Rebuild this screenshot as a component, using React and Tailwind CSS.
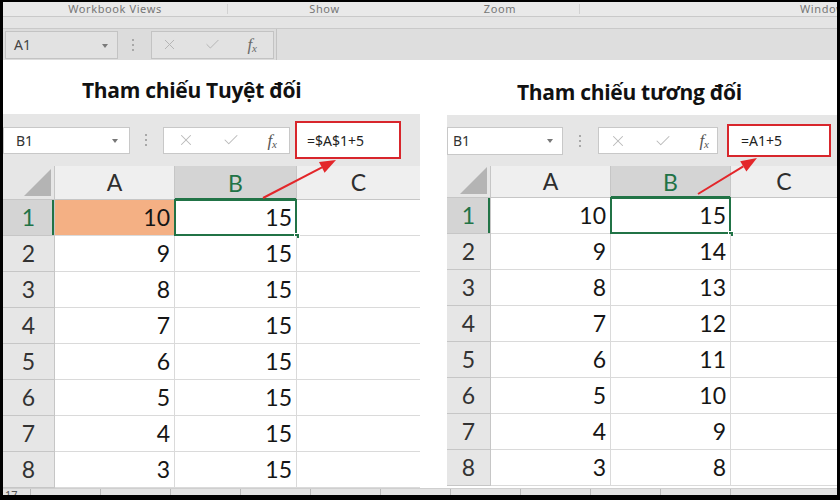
import React from "react";
import { X, Check } from "lucide-react";

const LEFT_ROWS = [[10, 15], [9, 15], [8, 15], [7, 15], [6, 15], [5, 15], [4, 15], [3, 15]];
const RIGHT_ROWS = [[10, 15], [9, 14], [8, 13], [7, 12], [6, 11], [5, 10], [4, 9], [3, 8]];

const LEFT = {
  w: "w-[417px]",
  title: "h-[54px] pt-[15px] pl-[79px]",
  bar: "h-[52px]",
  name: "w-[127px] h-[27px] pl-[12px]",
  arrow: "right-[11px]",
  dots: "ml-[15px]",
  tools: "ml-[15px] w-[127px] pl-[13px] pr-[12px]",
  red: "ml-[5px] w-[106px] h-[38px] pl-[10px]",
  hh: "h-[34px]",
  rh: "w-[52px]",
  ca: "w-[120px]",
  cb: "w-[122px]",
};

const RIGHT = {
  w: "w-[390px]",
  title: "h-[55px] pt-[17px] pl-[70px]",
  bar: "h-[51px]",
  name: "w-[116px] h-[28px] pl-[5px]",
  arrow: "right-[9px]",
  dots: "ml-[16px]",
  tools: "ml-[16px] w-[120px] pl-[10px] pr-[8px]",
  red: "ml-[9px] w-[104px] h-[33px] pl-[12px]",
  hh: "h-[32px]",
  rh: "w-[44px]",
  ca: "w-[120px]",
  cb: "w-[120px]",
};

function Fx({ className = "" }) {
  return (
    <span className={`font-['Liberation_Serif',serif] italic text-[17px] leading-none ${className}`}>
      f<span className="text-[11px] relative top-[2px]">x</span>
    </span>
  );
}

function Dots({ className = "" }) {
  return (
    <div className={`flex flex-col gap-[3px] w-[3px] ${className}`}>
      <span className="h-[2px] w-[2px] bg-[#a8a8a8]" />
      <span className="h-[2px] w-[2px] bg-[#a8a8a8]" />
      <span className="h-[2px] w-[2px] bg-[#a8a8a8]" />
    </div>
  );
}

function Ribbon() {
  return (
    <div className="font-['Noto_Sans',sans-serif]">
      {/* group labels */}
      <div className="h-[14px] flex bg-[#e9e9e9] text-[11px] tracking-[0.6px] leading-[14px] text-[#767676] border-b border-[#c9c9c9] box-content">
        <div className="w-[224px] text-center">Workbook Views</div>
        <div className="w-px my-[2px] bg-[#d2d2d2]" />
        <div className="w-[193px] text-center">Show</div>
        <div className="w-[158px] text-center">Zoom</div>
        <div className="w-px my-[2px] bg-[#d2d2d2]" />
        <div className="flex-1 pl-[220px] whitespace-nowrap overflow-hidden">Window</div>
      </div>
      <div className="h-[11px] bg-[#e4e4e4] border-b border-[#c9c9c9] box-content" />
      {/* formula bar */}
      <div className="h-[31px] flex items-center bg-[#dcdcdc]">
        <div className="relative ml-[2px] w-[113px] h-[28px] bg-[#e2e2e2] border border-[#c3c3c3] flex items-center pl-[8px] text-[14px] text-[#444]">
          A1
          <span className="absolute right-[9px] top-[12px] border-x-[3.5px] border-x-transparent border-t-[4px] border-t-[#7a7a7a]" />
        </div>
        <Dots className="ml-[14px]" />
        <div className="ml-[16px] w-[123px] h-[28px] bg-[#e2e2e2] border border-[#c3c3c3] flex items-center justify-between pl-[9px] pr-[16px] text-[#b4b4b4]">
          <X size={17} strokeWidth={1.4} />
          <Check size={17} strokeWidth={1.4} />
          <Fx className="text-[#6a6a6a]" />
        </div>
        <div className="ml-[2px] flex-1 h-[31px] bg-[#dedede] border-l border-[#c3c3c3]" />
      </div>
    </div>
  );
}

function FormulaStrip({ cfg, formula }) {
  return (
    <div className={`flex items-center bg-[#e6e6e6] font-['Noto_Sans',sans-serif] ${cfg.bar}`}>
      <div className={`relative bg-white border border-[#c8c8c8] flex items-center text-[14px] text-[#333] ${cfg.name}`}>
        B1
        <span className={`absolute top-[11px] border-x-[3.5px] border-x-transparent border-t-[4px] border-t-[#777] ${cfg.arrow}`} />
      </div>
      <Dots className={cfg.dots} />
      <div className={`h-[27px] bg-white border border-[#c8c8c8] flex items-center justify-between text-[#b9b9b9] ${cfg.tools}`}>
        <X size={18} strokeWidth={1.4} />
        <Check size={18} strokeWidth={1.4} />
        <Fx className="text-[#555]" />
      </div>
      <div className={`border-2 border-[#d8262c] bg-white flex items-center text-[14px] text-[#222] ${cfg.red}`}>
        {formula}
      </div>
    </div>
  );
}

function Grid({ cfg, rows, orange }) {
  return (
    <div className="font-['Lato',sans-serif]">
      <div className={`flex ${cfg.hh}`}>
        <div className={`relative bg-[#e6e6e6] border-r border-b border-[#c6c6c6] ${cfg.rh}`}>
          <svg className="absolute right-[3px] bottom-[3px]" width="27" height="27" viewBox="0 0 27 27">
            <polygon points="27,0 27,27 0,27" fill="#b4b4b4" />
          </svg>
        </div>
        <div className={`flex items-center justify-center bg-[#efefef] border-r border-b border-[#c6c6c6] text-[23px] text-[#2e2e2e] ${cfg.ca}`}>A</div>
        <div className={`flex items-center justify-center bg-[#d4d4d4] border-r border-[#c6c6c6] shadow-[inset_0_-2px_0_#217346] text-[23px] text-[#217346] ${cfg.cb}`}>B</div>
        <div className="flex-1 flex items-center justify-center bg-[#efefef] border-b border-[#c6c6c6] text-[23px] text-[#2e2e2e]">C</div>
      </div>
      {rows.map(([a, b], i) => (
        <div key={i} className="flex h-[36px] text-[23px] text-[#151515]">
          <div
            className={`flex items-center justify-center border-r border-b ${cfg.rh} ${
              i === 0
                ? "bg-[#d4d4d4] text-[#217346] border-[#c6c6c6] shadow-[inset_-2px_0_0_#217346]"
                : "bg-[#e6e6e6] text-[#333] border-[#c6c6c6]"
            }`}
          >
            {i + 1}
          </div>
          <div
            className={`flex items-center justify-end pr-[4px] border-r border-b border-[#dadada] ${cfg.ca} ${
              i === 0 && orange ? "bg-[#f4b084]" : "bg-white"
            }`}
          >
            {a}
          </div>
          <div className={`relative flex items-center justify-end pr-[4px] bg-white border-r border-b border-[#dadada] ${cfg.cb}`}>
            {b}
            {i === 0 && (
              <>
                <span className="absolute -left-[1px] -top-[1px] -right-[1px] -bottom-[1px] border-2 border-[#217346]" />
                <span className="absolute -right-[4px] -bottom-[4px] w-[6px] h-[6px] bg-[#217346] border border-white" />
              </>
            )}
          </div>
          <div className="flex-1 bg-white border-b border-[#dadada]" />
        </div>
      ))}
    </div>
  );
}

function Panel({ cfg, title, formula, rows, orange }) {
  return (
    <div className={`flex flex-col ${cfg.w}`}>
      <div className={`font-['Open_Sans',sans-serif] font-bold text-[21px] tracking-[-0.3px] leading-[30px] text-[#111] whitespace-nowrap ${cfg.title}`}>
        {title}
      </div>
      <FormulaStrip cfg={cfg} formula={formula} />
      <Grid cfg={cfg} rows={rows} orange={orange} />
    </div>
  );
}

export default function App() {
  const ticks = Array.from({ length: 11 });
  return (
    <div className="relative w-[840px] h-[500px] bg-black pt-[2px] px-[3px] pb-[5px]">
      <div className="h-full bg-white flex flex-col overflow-hidden">
        <Ribbon />

        <div className="flex gap-[27px]">
          <Panel cfg={LEFT} title="Tham chiếu Tuyệt đối" formula="=$A$1+5" rows={LEFT_ROWS} orange />
          <Panel cfg={RIGHT} title="Tham chiếu tương đối" formula="=A1+5" rows={RIGHT_ROWS} />
        </div>

        {/* sheet bottom strip */}
        <div className="mt-auto h-[7px] flex bg-[#e2e2e2] border-t border-[#cfcfcf] overflow-hidden font-['Noto_Sans',sans-serif] text-[11px] leading-[12px] text-[#555]">
          <div className="w-[27px] pl-[2px]">17</div>
          {ticks.map((_, i) => (
            <div key={i} className="w-[70px] border-l border-[#b8b8b8] shrink-0" />
          ))}
        </div>
      </div>

      {/* red annotation arrows */}
      <svg className="absolute inset-0 pointer-events-none" width="840" height="500" viewBox="0 0 840 500">
        <line x1="263" y1="198" x2="322" y2="167.4" stroke="#e3262a" strokeWidth="2" />
        <polygon points="336,160 324.6,172.7 319,162.1" fill="#e3262a" />
        <line x1="698" y1="194" x2="743.3" y2="166.3" stroke="#e3262a" strokeWidth="2" />
        <polygon points="757,158 746.4,171.4 740.2,161.2" fill="#e3262a" />
      </svg>
    </div>
  );
}
